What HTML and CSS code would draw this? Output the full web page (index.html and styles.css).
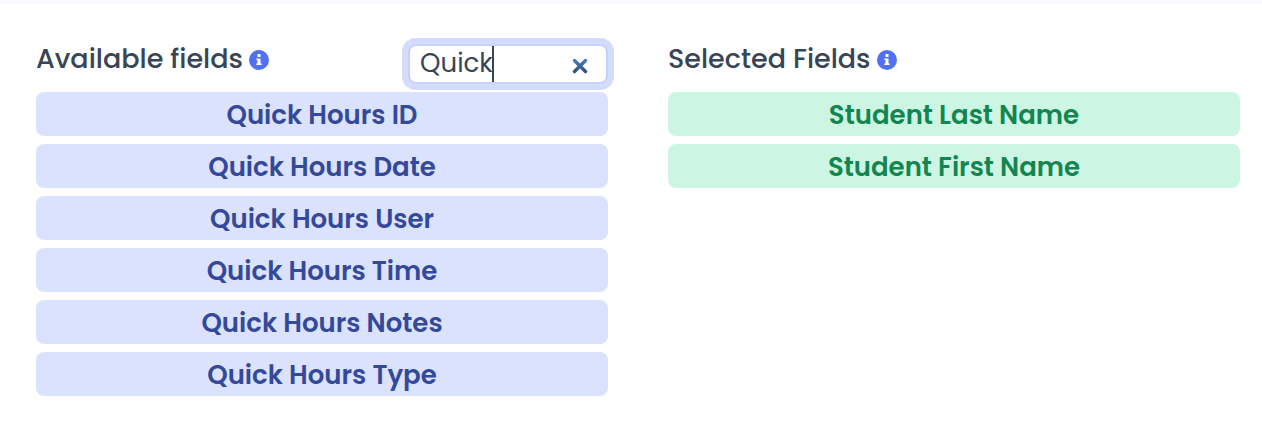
FILE: index.html
```html
<!DOCTYPE html>
<html lang="en">
<head>
<meta charset="utf-8">
<title>Report fields</title>
<link rel="stylesheet" href="styles.css">
</head>
<body>
<main class="picker">
  <section class="column">
    <header class="column-header">
      <h2 class="title">Available fields</h2>
      <svg class="info" viewBox="0 0 20 20" role="img" aria-label="Info"><circle cx="10" cy="10" r="10"/><path d="M8.5 4h3v3h-3zM7.3 8.4h4.2v5h1.2V15H7.3v-1.6h1.2V10H7.3z"/></svg>
      <div class="search">
        <input class="search-input" type="text" value="Quick" aria-label="Filter available fields">
        <span class="caret"></span>
        <button class="clear" type="button" aria-label="Clear">
          <svg class="clear-icon" viewBox="0 0 16 16"><defs><linearGradient id="shade" gradientUnits="userSpaceOnUse" x1="0" y1="0" x2="0" y2="16"><stop offset="0" stop-color="#4683cd"/><stop offset="1" stop-color="#284878"/></linearGradient></defs><path d="M2.5 2.5l11 11M13.5 2.5l-11 11"/></svg>
        </button>
      </div>
    </header>
    <ul class="fields">
      <li class="field">Quick Hours ID</li>
      <li class="field">Quick Hours Date</li>
      <li class="field">Quick Hours User</li>
      <li class="field">Quick Hours Time</li>
      <li class="field">Quick Hours Notes</li>
      <li class="field">Quick Hours Type</li>
    </ul>
  </section>
  <section class="column">
    <header class="column-header">
      <h2 class="title">Selected Fields</h2>
      <svg class="info" viewBox="0 0 20 20" role="img" aria-label="Info"><circle cx="10" cy="10" r="10"/><path d="M8.5 4h3v3h-3zM7.3 8.4h4.2v5h1.2V15H7.3v-1.6h1.2V10H7.3z"/></svg>
    </header>
    <ul class="fields">
      <li class="field field-selected">Student Last Name</li>
      <li class="field field-selected">Student First Name</li>
    </ul>
  </section>
</main>
</body>
</html>
```
FILE: styles.css
```css
* {
  box-sizing: border-box;
}

body {
  margin: 0;
  border-top: 4px solid #f8f9fe;
  background: #fff;
  color: #384556;
  font-family: Poppins, Inter, sans-serif;
}

.picker {
  display: grid;
  grid-template-columns: 1fr 1fr;
  gap: 60px;
  padding: 40px 22px 26px 36px;
}

.column-header {
  display: flex;
  align-items: center;
  gap: 6px;
  height: 40px;
  margin-bottom: 8px;
}

.title {
  margin: 0;
  padding-bottom: 10px;
  font-size: 27px;
  font-weight: 500;
  line-height: 32px;
}

.info {
  width: 20px;
  height: 20px;
  margin-bottom: 8px;
  fill: #5271f2;
}

.info path {
  fill: #fff;
}

.search {
  position: relative;
  width: 200px;
  height: 40px;
  margin-left: auto;
}

.search-input {
  width: 100%;
  height: 40px;
  padding: 0 48px 2px 10px;
  border: 2px solid #c7d2fb;
  border-radius: 8px;
  outline: none;
  box-shadow: 0 0 0 6px #d3dcfc;
  background: #fff;
  color: #384556;
  font: 400 26px/34px Poppins, Inter, sans-serif;
}

.caret {
  position: absolute;
  top: 2px;
  left: 84px;
  width: 2px;
  height: 36px;
  background: #384556;
}

.clear {
  position: absolute;
  top: 14px;
  right: 20px;
  width: 16px;
  height: 16px;
  padding: 0;
  border: 0;
  background: none;
}

.clear-icon {
  display: block;
  width: 16px;
  height: 16px;
  fill: none;
  stroke: url(#shade);
  stroke-width: 3.4;
  stroke-linecap: round;
}

.fields {
  display: grid;
  gap: 8px;
  margin: 0;
  padding: 0;
  list-style: none;
}

.field {
  padding: 7px 16px 5px;
  border-radius: 8px;
  background: #dbe2fd;
  color: #34499a;
  font-size: 26px;
  font-weight: 600;
  line-height: 32px;
  text-align: center;
}

.field-selected {
  background: #cdf5e3;
  color: #128550;
}
```
